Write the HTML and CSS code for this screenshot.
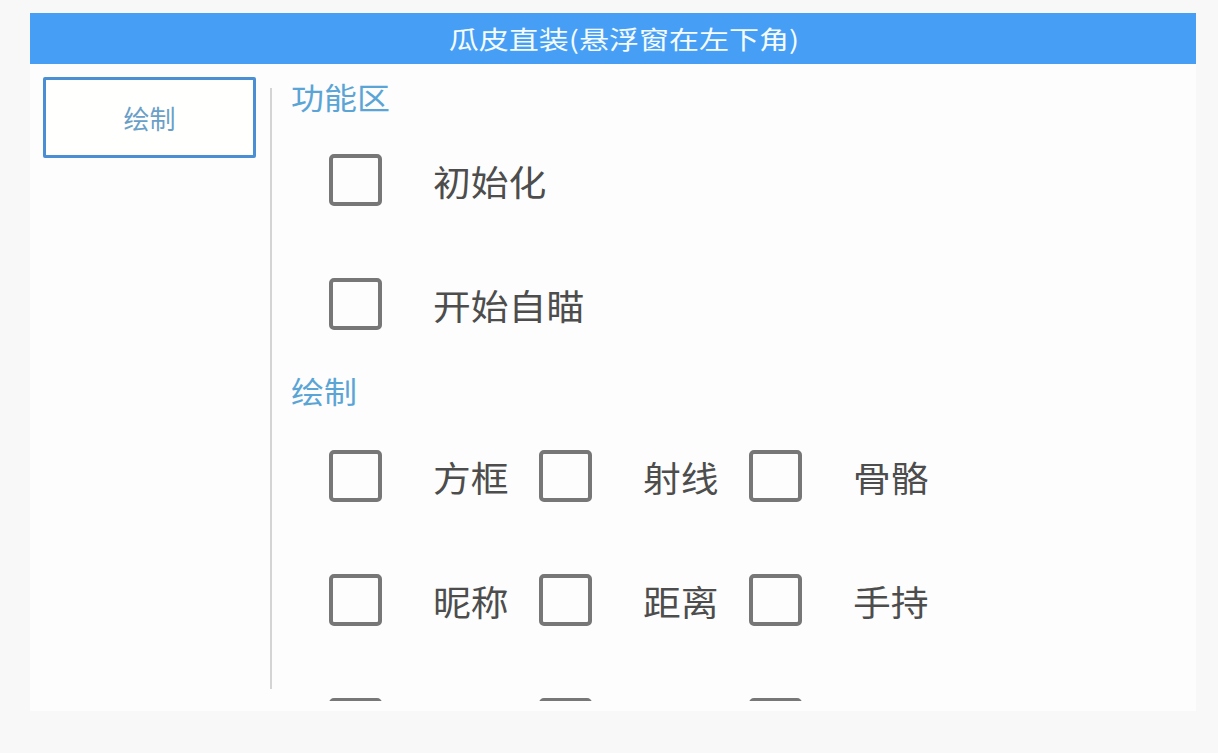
FILE: index.html
```html
<!DOCTYPE html>
<html lang="zh">
<head>
<meta charset="utf-8">
<title>瓜皮直装</title>
<link rel="stylesheet" href="styles.css">
</head>
<body>
<div class="panel">
  <div class="titlebar"><span class="title-text">瓜皮直装(悬浮窗在左下角)</span></div>
  <div class="main">
    <div class="nav">
      <div class="nav-btn">绘制</div>
    </div>
    <div class="divider"></div>
    <div class="content">
      <div class="section-head first"><span class="head-text">功能区</span></div>
      <div class="row">
        <div class="item"><span class="box"></span><span class="label">初始化</span></div>
      </div>
      <div class="row">
        <div class="item"><span class="box"></span><span class="label">开始自瞄</span></div>
      </div>
      <div class="section-head"><span class="head-text">绘制</span></div>
      <div class="row">
        <div class="item"><span class="box"></span><span class="label">方框</span></div>
        <div class="item"><span class="box"></span><span class="label">射线</span></div>
        <div class="item"><span class="box"></span><span class="label">骨骼</span></div>
      </div>
      <div class="row">
        <div class="item"><span class="box"></span><span class="label">昵称</span></div>
        <div class="item"><span class="box"></span><span class="label">距离</span></div>
        <div class="item"><span class="box"></span><span class="label">手持</span></div>
      </div>
      <div class="row">
        <div class="item"><span class="box"></span></div>
        <div class="item"><span class="box"></span></div>
        <div class="item"><span class="box"></span></div>
      </div>
    </div>
  </div>
</div>
</body>
</html>
```

FILE: styles.css
```css
* { box-sizing: border-box; }
html, body { margin: 0; padding: 0; }
body {
  background: #f8f8f8;
  font-family: "Noto Sans CJK SC", "Noto Sans", sans-serif;
  width: 1218px;
  height: 753px;
  overflow: hidden;
}
.panel {
  margin: 13px 0 0 30px;
  width: 1166px;
  height: 698px;
  background: #fdfdfd;
  display: flex;
  flex-direction: column;
}
.titlebar {
  height: 51px;
  flex: none;
  background: #469ff4;
  color: #f4fbff;
  font-size: 25px;
  line-height: 51px;
  text-align: center;
  padding-left: 22px;
}
.title-text {
  display: inline-block;
  transform: scaleX(1.2);
}
.main {
  flex: 1;
  display: flex;
  min-height: 0;
}
.nav {
  width: 240px;
  flex: none;
  padding: 13px 0 0 13px;
}
.nav-btn {
  width: 213px;
  height: 81px;
  border: 3px solid #4a8fd3;
  border-radius: 2px;
  background: #fffffe;
  color: #6a9fc8;
  font-size: 26px;
  line-height: 75px;
  text-align: center;
}
.divider {
  width: 2px;
  flex: none;
  background: #d4d4d4;
  margin: 24px 0 22px;
}
.content {
  flex: 1;
  height: 637px;
  overflow: hidden;
  padding: 8px 0 0 19px;
}
.section-head {
  height: 48px;
  line-height: 48px;
  font-size: 30px;
  color: #5aa5d6;
}
.section-head.first {
  height: 46px;
  line-height: 48px;
}
.head-text {
  display: inline-block;
  transform: scaleX(1.1);
  transform-origin: left center;
}
.row {
  height: 124px;
  display: grid;
  grid-template-columns: repeat(3, 210px);
  align-items: center;
  padding-left: 38px;
}
.item {
  display: flex;
  align-items: center;
  gap: 51px;
}
.box {
  width: 53px;
  height: 52px;
  flex: none;
  border: 4px solid #777777;
  border-radius: 5px;
}
.label {
  display: inline-block;
  font-size: 35px;
  color: #4d4d4d;
  transform: scaleX(1.08);
  transform-origin: left center;
  white-space: nowrap;
}
```
